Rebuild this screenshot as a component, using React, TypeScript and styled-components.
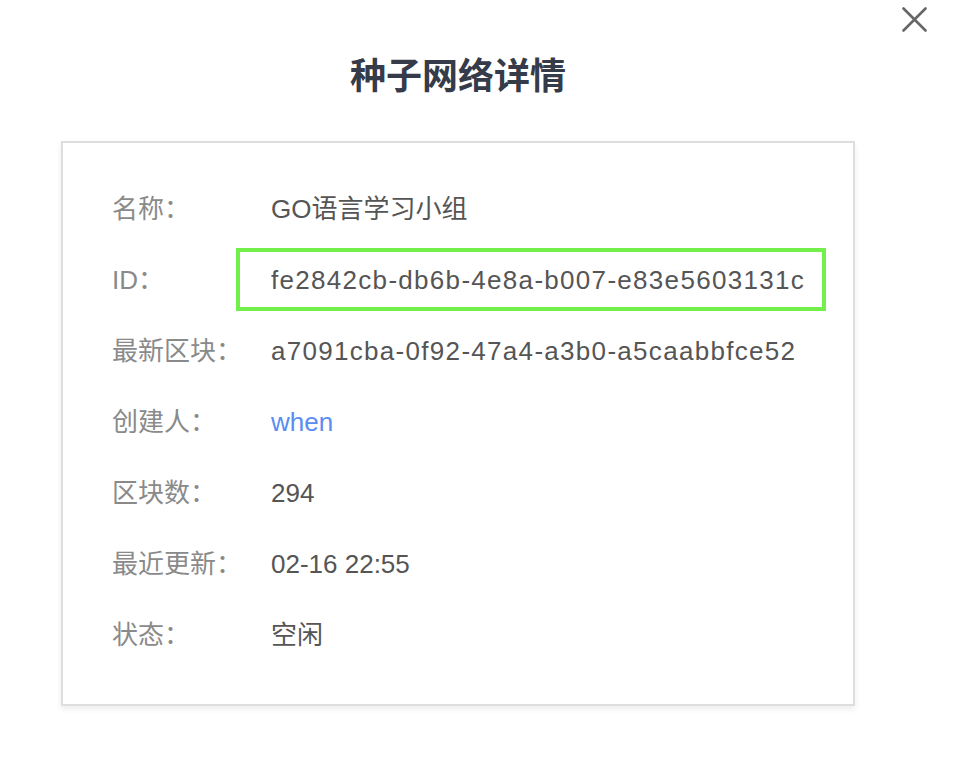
import React from "react";
import styled, { createGlobalStyle } from "styled-components";

const Global = createGlobalStyle`
  html, body { margin: 0; padding: 0; background: #ffffff; }
  body { font-family: "Liberation Sans", "Noto Sans CJK SC", sans-serif; }
`;

const Page = styled.div`
  position: relative;
  width: 954px;
  height: 766px;
  background: #ffffff;
  overflow: hidden;
`;

const CloseButton = styled.button`
  position: absolute;
  top: 7px;
  left: 902px;
  width: 25px;
  height: 25px;
  padding: 0;
  border: none;
  background: transparent;
  cursor: pointer;
  display: block;
`;

const Dialog = styled.div`
  width: 916px;
  padding: 55px 61px 0;
  box-sizing: border-box;
  display: flex;
  flex-direction: column;
  align-items: center;
`;

const Title = styled.h2`
  margin: 0;
  font-size: 36px;
  line-height: 36px;
  font-weight: 700;
  color: #353b48;
  font-family: "Noto Sans CJK SC", sans-serif;
`;

const Card = styled.div`
  margin-top: 50px;
  width: 794px;
  height: 565px;
  box-sizing: border-box;
  border: 2px solid #dedede;
  box-shadow: 0 3px 6px rgba(0, 0, 0, 0.08);
  padding: 30px 0 0 49px;
  display: flex;
  flex-direction: column;
`;

const Row = styled.div`
  display: flex;
  align-items: center;
  height: 71px;
`;

const Label = styled.div`
  width: 159px;
  flex-shrink: 0;
  font-size: 26px;
  line-height: 30px;
  color: #8a8a8a;
`;

const Value = styled.div<{ $link?: boolean; $spaced?: boolean }>`
  position: relative;
  font-size: 26px;
  line-height: 30px;
  color: ${(p) => (p.$link ? "#5b8cf2" : "#555555")};
  letter-spacing: ${(p) => (p.$spaced ? "1.3px" : "0")};
  white-space: nowrap;
`;

const Highlight = styled.div`
  position: absolute;
  left: -35px;
  right: -21px;
  top: -17px;
  bottom: -16px;
  border: 4px solid #73ef4c;
  pointer-events: none;
`;

const rows: { label: string; value: string; link?: boolean; spaced?: boolean; highlight?: boolean }[] = [
  { label: "名称：", value: "GO语言学习小组" },
  { label: "ID：", value: "fe2842cb-db6b-4e8a-b007-e83e5603131c", spaced: true, highlight: true },
  { label: "最新区块：", value: "a7091cba-0f92-47a4-a3b0-a5caabbfce52", spaced: true },
  { label: "创建人：", value: "when", link: true },
  { label: "区块数：", value: "294" },
  { label: "最近更新：", value: "02-16 22:55" },
  { label: "状态：", value: "空闲" },
];

export default function App() {
  return (
    <Page>
      <Global />
      <CloseButton aria-label="关闭">
        <svg width="25" height="25" viewBox="0 0 25 25">
          <path d="M1.5 1.5 L23.5 23.5 M23.5 1.5 L1.5 23.5" stroke="#666666" strokeWidth="2.6" strokeLinecap="round" />
        </svg>
      </CloseButton>
      <Dialog>
        <Title>种子网络详情</Title>
        <Card>
          {rows.map((r) => (
            <Row key={r.label}>
              <Label>{r.label}</Label>
              <Value $link={r.link} $spaced={r.spaced}>
                {r.value}
                {r.highlight && <Highlight />}
              </Value>
            </Row>
          ))}
        </Card>
      </Dialog>
    </Page>
  );
}
